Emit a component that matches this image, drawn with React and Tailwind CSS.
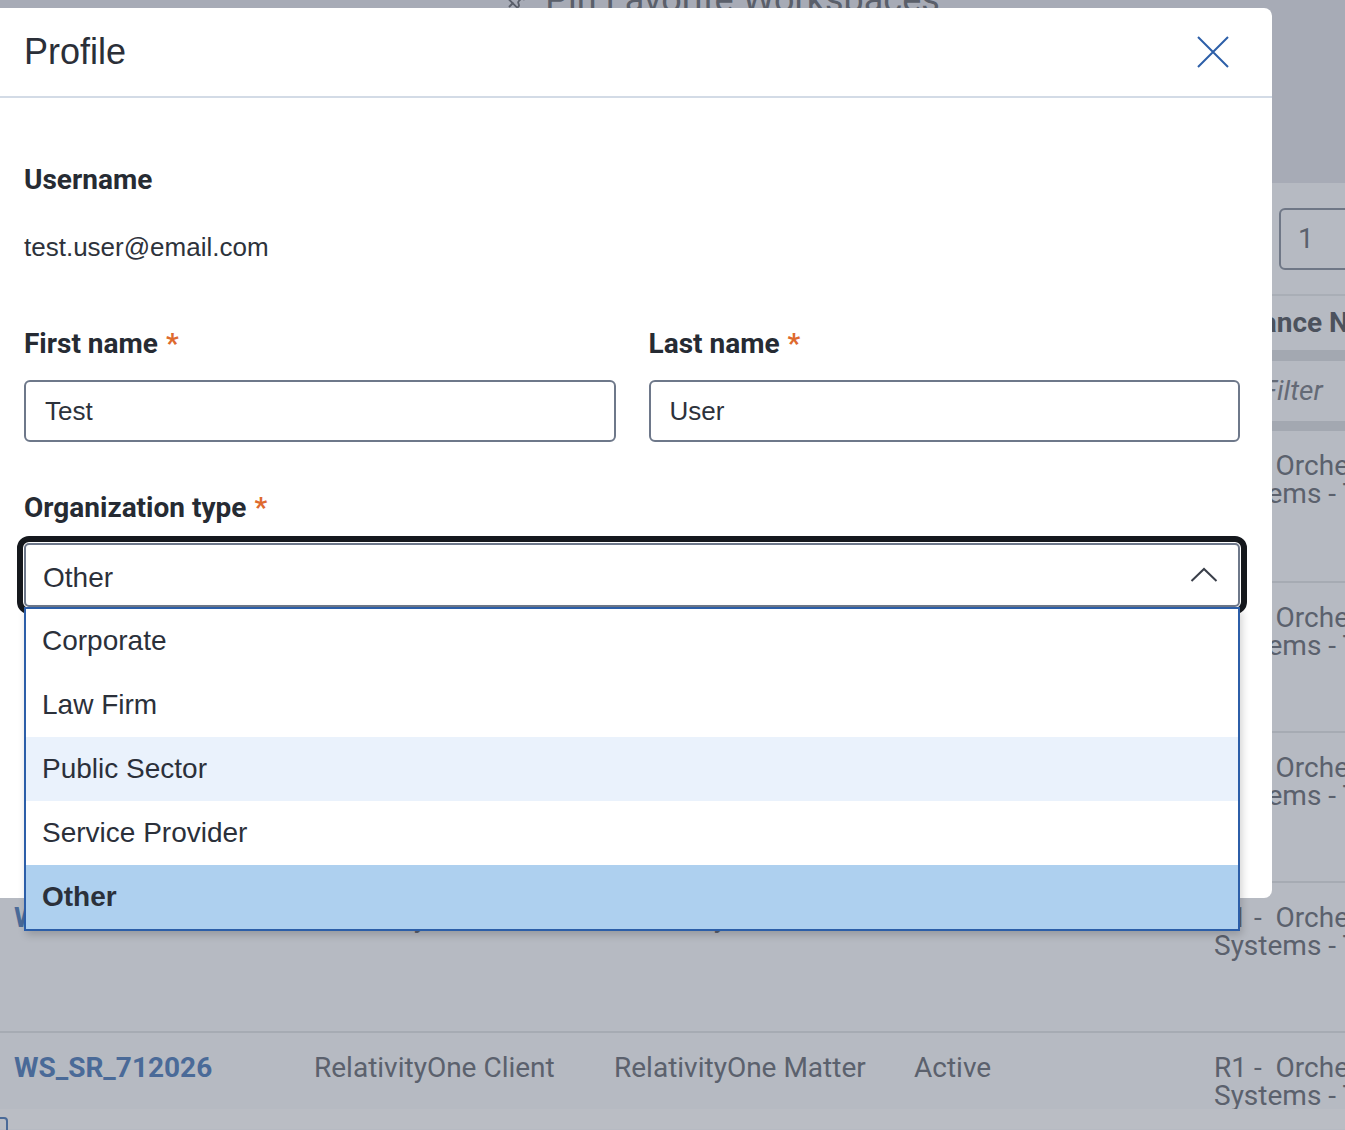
import { Pin } from 'lucide-react'

const ROWS = [
  { id: 'WS_SR_712022', client: 'RelativityOne Client', matter: 'RelativityOne Matter', status: 'Active' },
  { id: 'WS_SR_712023', client: 'RelativityOne Client', matter: 'RelativityOne Matter', status: 'Active' },
  { id: 'WS_SR_712024', client: 'RelativityOne Client', matter: 'RelativityOne Matter', status: 'Active' },
  { id: 'WS_SR_712025', client: 'RelativityOne Client', matter: 'RelativityOne Matter', status: 'Active' },
  { id: 'WS_SR_712026', client: 'RelativityOne Client', matter: 'RelativityOne Matter', status: 'Active' },
]

const OPTIONS = [
  { label: 'Corporate' },
  { label: 'Law Firm' },
  { label: 'Public Sector', hover: true },
  { label: 'Service Provider' },
  { label: 'Other', selected: true },
]

function Label({ children, required }) {
  return (
    <div className="font-['Roboto',sans-serif] font-bold text-[28px] leading-[32px] text-[#262b33]">
      {children}
      {required && <span className="ml-[8px] text-[#de6a2e]">*</span>}
    </div>
  )
}

function TextInput({ value }) {
  return (
    <div className="h-[62px] flex items-center border-2 border-[#6e788a] rounded-[6px] px-[19px] text-[26px] text-[#2d323b] font-['Liberation_Sans',Arial,sans-serif]">
      {value}
    </div>
  )
}

export default function App() {
  return (
    <div className="relative w-[1345px] h-[1130px] overflow-hidden bg-[#b6bac2] font-['Roboto',sans-serif] text-[#5b616d]">
      {/* page behind the overlay */}
      <div className="h-[183px] flex flex-col bg-[#a7abb6]">
        <div className="flex items-center justify-center gap-[18px] pl-[100px] mt-[-18px] text-[36px] leading-[36px] text-[#5a5f6a]">
          <Pin size={22} className="rotate-45" />
          <span>Pin Favorite Workspaces</span>
        </div>
      </div>

      <div className="flex pl-[1279px] pt-[25px]">
        <div className="shrink-0 w-[110px] h-[62px] flex items-center pl-[17px] border-2 border-[#6f7786] rounded-[6px] text-[28px]">1</div>
      </div>

      <div className="mt-[24px] border-t-2 border-[#a9aeb6]">
        <div className="grid grid-cols-[300px_300px_300px_300px_1fr] pl-[14px] h-[54px] items-center font-bold text-[28px] text-[#4c525d] whitespace-nowrap">
          <span>Workspace</span>
          <span>Client</span>
          <span>Matter</span>
          <span>Status</span>
          <span>Instance Name</span>
        </div>
        <div className="h-[11px] bg-[#a3a8b1]" />
        <div className="grid grid-cols-[300px_300px_300px_300px_1fr] pl-[14px] h-[60px] items-center italic text-[28px] text-[#646a76] whitespace-nowrap">
          <span>Filter</span>
          <span>Filter</span>
          <span>Filter</span>
          <span>Filter</span>
          <span className="pl-[48px]">Filter</span>
        </div>
        <div className="h-[10px] bg-[#a3a8b1]" />
        {ROWS.map((r, i) => (
          <div
            key={r.id}
            className={`grid grid-cols-[300px_300px_300px_300px_1fr] pl-[14px] pt-[21px] text-[28px] leading-[28px] whitespace-nowrap overflow-hidden ${i > 0 ? 'border-t-2 border-[#a6abb3]' : ''} ${i === ROWS.length - 1 ? 'h-[78px]' : 'h-[150px]'}`}
          >
            <span className="font-bold text-[#4a6a98]">{r.id}</span>
            <span>{r.client}</span>
            <span>{r.matter}</span>
            <span>{r.status}</span>
            <span>
              R1 -&nbsp; Orchestration
              <br />
              Systems - Tenant
            </span>
          </div>
        ))}
        <div className="h-[20px] bg-[#babdc4] pt-[8px]">
          <div className="w-[14px] h-[20px] ml-[-6px] border-2 border-[#4a6a98] rounded-[4px]" />
        </div>
      </div>

      {/* Profile modal */}
      <div className="absolute left-0 top-[8px] w-[1272px] h-[890px] bg-white rounded-r-[8px]">
        <div className="h-[90px] flex items-center justify-between pl-[24px] pr-[43px] border-b-2 border-[#d3dbe6]">
          <h2 className="text-[36px] text-[#2b2f38] font-['Liberation_Sans',Arial,sans-serif]">Profile</h2>
          <svg width="32" height="32" viewBox="0 0 32 32" fill="none" stroke="#2d5fa8" strokeWidth="2">
            <path d="M1 1 L31 31 M31 1 L1 31" />
          </svg>
        </div>

        <div className="pl-[24px] pr-[32px] pt-[66px]">
          <Label>Username</Label>
          <div className="mt-[35px] text-[26px] leading-[32px] text-[#2d323b] font-['Liberation_Sans',Arial,sans-serif]">
            test.user@email.com
          </div>

          <div className="mt-[65px] grid grid-cols-2 gap-[33px]">
            <div>
              <Label required>First name</Label>
              <div className="mt-[20px]">
                <TextInput value="Test" />
              </div>
            </div>
            <div>
              <Label required>Last name</Label>
              <div className="mt-[20px]">
                <TextInput value="User" />
              </div>
            </div>
          </div>

          <div className="mt-[50px]">
            <Label required>Organization type</Label>
            <div className="relative mt-[19px]">
              <div className="h-[64px] flex items-center justify-between pl-[17px] pr-[20px] border-2 border-[#6e788a] rounded-[5px] outline-[6px] outline-solid outline-[#15181d] outline-offset-[1px] text-[28px] text-[#2b303a] font-['Liberation_Sans',Arial,sans-serif]">
                <span className="pt-[6px]">Other</span>
                <svg width="28" height="16" viewBox="0 0 28 16" fill="none" stroke="#3a3f4a" strokeWidth="2">
                  <path d="M1.5 14 L14 2 L26.5 14" />
                </svg>
              </div>
              <ul className="absolute left-0 right-0 top-full z-10 bg-white border-2 border-[#2c5ea8] shadow-[2px_4px_8px_rgba(0,0,0,0.18)] text-[28px] text-[#2b303a] font-['Liberation_Sans',Arial,sans-serif]">
                {OPTIONS.map(o => (
                  <li
                    key={o.label}
                    className={`h-[64px] flex items-center pl-[16px] ${o.selected ? 'bg-[#aed0ef] font-bold' : o.hover ? 'bg-[#eaf2fc]' : ''}`}
                  >
                    {o.label}
                  </li>
                ))}
              </ul>
            </div>
          </div>
        </div>
      </div>
    </div>
  )
}
